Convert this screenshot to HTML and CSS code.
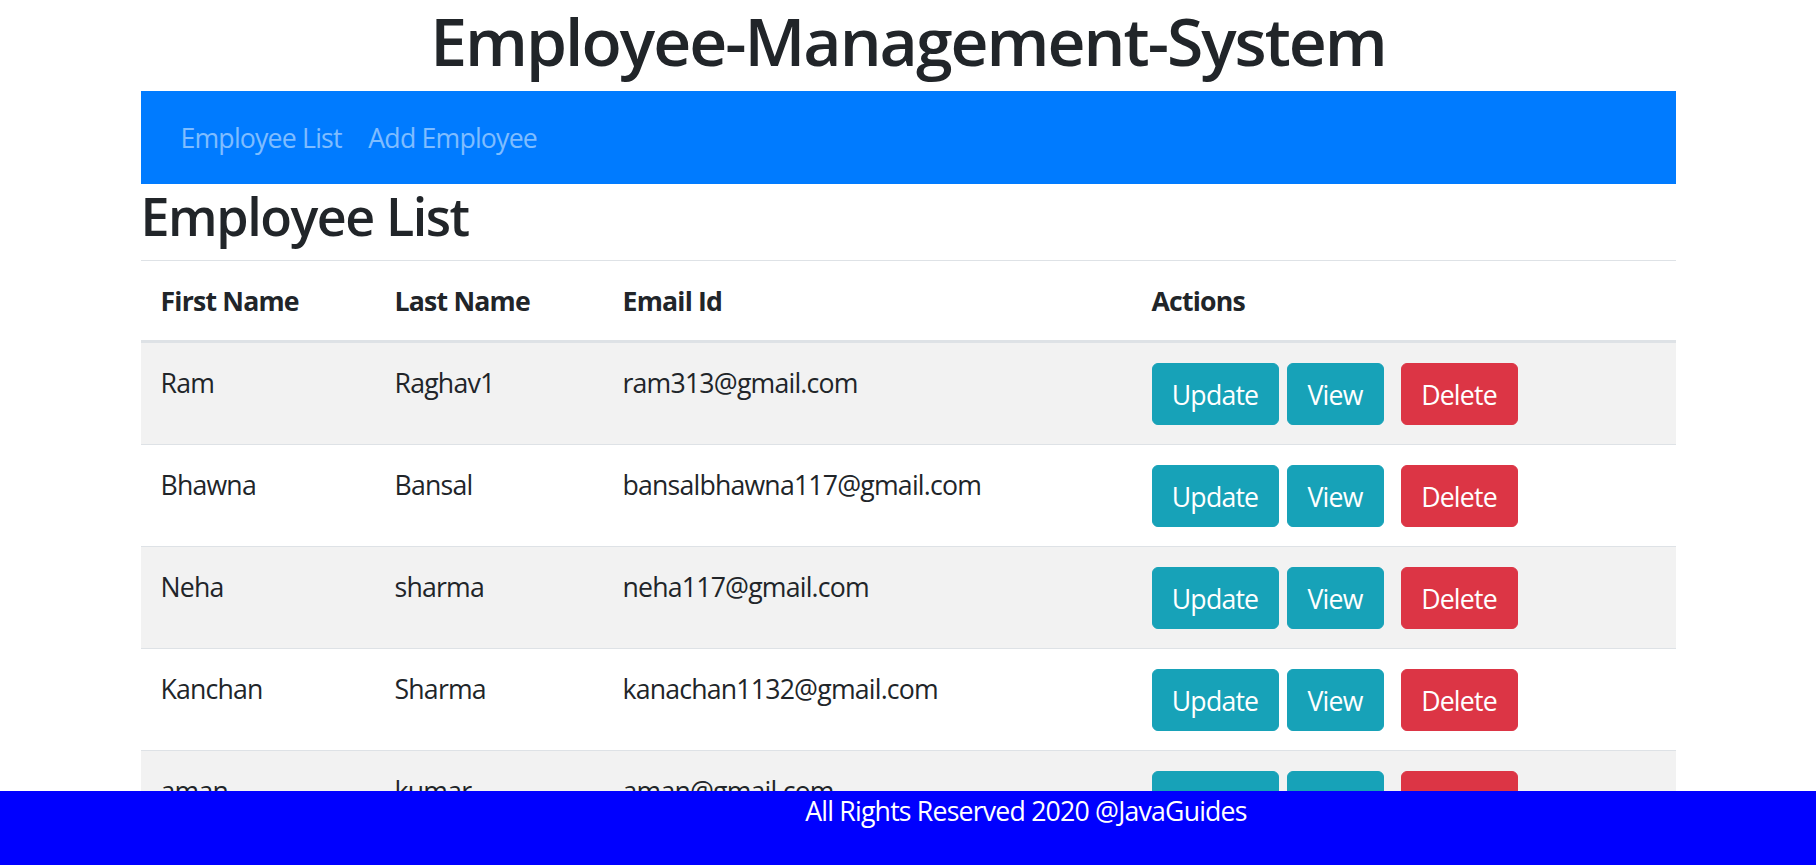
FILE: index.html
```html
<!DOCTYPE html>
<html lang="en">
<head>
<meta charset="utf-8">
<title>Employee Management System</title>
<link rel="stylesheet" href="styles.css">
</head>
<body>
<h1 class="title">Employee-Management-System</h1>
<div class="container">
  <nav class="navbar">
    <a class="nav-link" href="#">Employee List</a>
    <a class="nav-link" href="#">Add Employee</a>
  </nav>
  <h2 class="page-title">Employee List</h2>
  <table class="table">
    <thead>
      <tr>
        <th class="col-first">First Name</th>
        <th class="col-last">Last Name</th>
        <th class="col-email">Email Id</th>
        <th>Actions</th>
      </tr>
    </thead>
    <tbody>
      <tr>
        <td>Ram</td><td>Raghav1</td><td>ram313@gmail.com</td>
        <td><div class="actions"><button class="btn btn-info btn-update">Update</button><button class="btn btn-info btn-view">View</button><button class="btn btn-danger btn-delete">Delete</button></div></td>
      </tr>
      <tr>
        <td>Bhawna</td><td>Bansal</td><td>bansalbhawna117@gmail.com</td>
        <td><div class="actions"><button class="btn btn-info btn-update">Update</button><button class="btn btn-info btn-view">View</button><button class="btn btn-danger btn-delete">Delete</button></div></td>
      </tr>
      <tr>
        <td>Neha</td><td>sharma</td><td>neha117@gmail.com</td>
        <td><div class="actions"><button class="btn btn-info btn-update">Update</button><button class="btn btn-info btn-view">View</button><button class="btn btn-danger btn-delete">Delete</button></div></td>
      </tr>
      <tr>
        <td>Kanchan</td><td>Sharma</td><td>kanachan1132@gmail.com</td>
        <td><div class="actions"><button class="btn btn-info btn-update">Update</button><button class="btn btn-info btn-view">View</button><button class="btn btn-danger btn-delete">Delete</button></div></td>
      </tr>
      <tr>
        <td>aman</td><td>kumar</td><td>aman@gmail.com</td>
        <td><div class="actions"><button class="btn btn-info btn-update">Update</button><button class="btn btn-info btn-view">View</button><button class="btn btn-danger btn-delete">Delete</button></div></td>
      </tr>
    </tbody>
  </table>
</div>
<footer class="footer">
  <span class="footer-text">All Rights Reserved 2020 @JavaGuides</span>
</footer>
</body>
</html>
```
FILE: styles.css
```css
* { box-sizing: border-box; }

body {
  margin: 0;
  font-family: "Open Sans", "Noto Sans", sans-serif;
  font-size: 26.67px;
  line-height: 40px;
  color: #212529;
  letter-spacing: -0.03em;
  background: #fff;
}

.title {
  margin: 0 0 11px;
  text-align: center;
  font-size: 66px;
  line-height: 80px;
  font-weight: 600;
  letter-spacing: -0.03em;
}

.container {
  width: 1535px;
  margin: 0 auto;
}

.navbar {
  display: flex;
  align-items: center;
  height: 93px;
  padding: 0 26.7px;
  background: #007bff;
}

.nav-link {
  padding: 0 13.3px;
  color: rgba(255, 255, 255, 0.5);
  text-decoration: none;
}

.page-title {
  margin: 0 0 12px;
  font-size: 52px;
  line-height: 64px;
  font-weight: 600;
  letter-spacing: -0.028em;
}

.table {
  width: 100%;
  border-collapse: collapse;
  table-layout: fixed;
}

.table th,
.table td {
  padding: 20px 20px 19px;
  border-top: 1px solid #dee2e6;
  text-align: left;
  vertical-align: top;
  line-height: 40px;
  white-space: nowrap;
}

.table th {
  font-weight: 700;
  border-bottom: 3px solid #dee2e6;
}

.col-first { width: 234px; }
.col-last { width: 228px; }
.col-email { width: 529px; }

.table tbody tr:nth-child(odd) {
  background: #f2f2f2;
}

.actions {
  display: flex;
}

.btn {
  height: 62px;
  padding: 0;
  border: 1px solid transparent;
  border-radius: 6px;
  font-family: inherit;
  font-size: 26.67px;
  letter-spacing: -0.03em;
  color: #fff;
  cursor: pointer;
}

.btn-info {
  background: #17a2b8;
  border-color: #17a2b8;
}

.btn-danger {
  background: #dc3545;
  border-color: #dc3545;
}

.btn-update { width: 127px; }
.btn-view { width: 97px; margin-left: 8px; }
.btn-delete { width: 117px; margin-left: 17px; }

.footer {
  position: fixed;
  left: 0;
  right: 0;
  bottom: 0;
  height: 74px;
  padding-left: 236px;
  background: #0000ff;
  color: #fff;
  text-align: center;
}
```
